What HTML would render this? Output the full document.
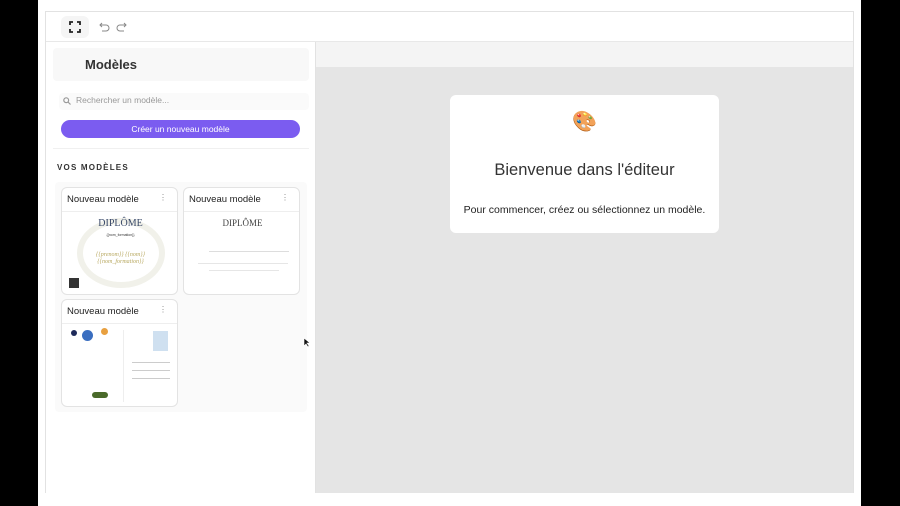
<!DOCTYPE html>
<html><head><meta charset="utf-8"><style>
*{box-sizing:border-box;margin:0;padding:0}
body{width:900px;height:506px;background:#000;position:relative;overflow:hidden;font-family:"Liberation Sans",sans-serif;color:#222}
.page{position:absolute;left:38px;top:0;width:823px;height:506px;background:#fff}
.frame{position:absolute;left:45px;top:11px;width:809px;height:482px;border:1px solid #e2e2e2;background:#fff}
.tb{position:absolute;left:0;top:0;width:807px;height:30px;border-bottom:1px solid #e8e8e8}
.side{position:absolute;left:0;top:30px;width:270px;height:451px;border-right:1px solid #e2e2e2;background:#fff}
.strip{position:absolute;left:270px;top:30px;width:537px;height:25px;background:#f4f4f4}
.canvas{position:absolute;left:270px;top:55px;width:537px;height:426px;background:#e5e5e5}
.welcome{position:absolute;left:134px;top:28px;width:269px;height:138px;background:#fff;border-radius:6px;text-align:center}
.card{position:absolute;width:117px;height:108px;border:1px solid #e3e3e3;border-radius:6px;background:#fff;overflow:hidden}
.card .h{height:24px;border-bottom:1px solid #eee;font-size:9.5px;padding:6px 0 0 5px;position:relative;color:#222}
.card .h b{position:absolute;right:10px;top:5px;font-weight:normal;color:#888;font-size:8px}
</style></head><body>
<div class="page"></div>
<div class="frame">
 <div class="tb">
  <div style="position:absolute;left:15px;top:4px;width:28px;height:22px;border-radius:6px;background:#f5f5f5"></div>
  <svg style="position:absolute;left:23px;top:9px" width="12" height="12" viewBox="0 0 12 12" fill="none" stroke="#222" stroke-width="1.8"><path d="M1 4V1h3M8 1h3v3M11 8v3H8M4 11H1V8"/></svg>
  <svg style="position:absolute;left:53px;top:10px" width="28" height="10" viewBox="0 0 28 10" fill="none" stroke="#888" stroke-width="1"><path d="M3 1L1 3l2 2M1 3h6a3 3 0 010 6H3M25 1l2 2-2 2M27 3h-6a3 3 0 000 6h4"/></svg>
 </div>
 <div class="side">
  <div style="position:absolute;left:7px;top:6px;width:256px;height:33px;background:#f8f8f8;border-radius:4px"></div>
  <div style="position:absolute;left:39px;top:15px;font-size:13px;font-weight:bold;color:#333">Modèles</div>
  <div style="position:absolute;left:13px;top:51px;width:250px;height:17px;background:#fafafa;border-radius:4px"></div>
  <svg style="position:absolute;left:17px;top:55px" width="8" height="8" viewBox="0 0 8 8" fill="none" stroke="#999" stroke-width="1.2"><circle cx="3.2" cy="3.2" r="2.4"/><path d="M5 5l2.5 2.5"/></svg>
  <div style="position:absolute;left:30px;top:53px;font-size:8.5px;color:#999">Rechercher un modèle...</div>
  <div style="position:absolute;left:15px;top:78px;width:239px;height:18px;background:#7b5cf0;border-radius:9px;color:#fff;font-size:8.5px;text-align:center;line-height:18px">Créer un nouveau modèle</div>
  <div style="position:absolute;left:7px;top:106px;width:256px;height:1px;background:#f0f0f0"></div>
  <div style="position:absolute;left:11px;top:121px;font-size:8px;font-weight:bold;letter-spacing:1.2px;color:#333">VOS MODÈLES</div>
  <div style="position:absolute;left:9px;top:140px;width:252px;height:230px;background:#fafafa;border-radius:4px"></div>
  <div class="card" style="left:15px;top:145px"><div class="h">Nouveau modèle<b>⋮</b></div>
   <div style="position:absolute;left:15px;top:30px;width:88px;height:70px;border-radius:50%;border:6px solid #f1f1ea"></div>
   <div style="position:absolute;left:0;width:117px;top:30px;text-align:center;font-family:'Liberation Serif',serif;font-size:10px;color:#3a4a6a">DIPLÔME</div>
   <div style="position:absolute;left:0;width:117px;top:45px;text-align:center;font-size:3.5px;color:#333">{{nom_formation}}</div>
   <div style="position:absolute;left:0;width:117px;top:64px;text-align:center;font-family:'Liberation Serif',serif;font-style:italic;font-size:6px;color:#b8a860;line-height:7px">{{prenom}} {{nom}}<br>{{nom_formation}}</div>
   <div style="position:absolute;left:7px;top:90px;width:10px;height:10px;background:#333"></div>
  </div>
  <div class="card" style="left:137px;top:145px"><div class="h">Nouveau modèle<b>⋮</b></div>
   <div style="position:absolute;left:0;width:117px;top:30px;text-align:center;font-family:'Liberation Serif',serif;font-size:9px;color:#444">DIPLÔME</div>
   <div style="position:absolute;left:25px;top:63px;width:80px;height:1px;background:#ddd"></div>
   <div style="position:absolute;left:14px;top:75px;width:90px;height:1px;background:#e6e6e6"></div>
   <div style="position:absolute;left:25px;top:82px;width:70px;height:1px;background:#e6e6e6"></div>
  </div>
  <div class="card" style="left:15px;top:257px"><div class="h">Nouveau modèle<b>⋮</b></div>
   <div style="position:absolute;left:9px;top:30px;width:6px;height:6px;border-radius:50%;background:#1e2a5a"></div>
   <div style="position:absolute;left:20px;top:30px;width:11px;height:11px;border-radius:50%;background:#3a6ec0"></div>
   <div style="position:absolute;left:39px;top:28px;width:7px;height:7px;border-radius:50%;background:#e8a040"></div>
   <div style="position:absolute;left:61px;top:30px;width:1px;height:72px;background:#eee"></div>
   <div style="position:absolute;left:91px;top:31px;width:15px;height:20px;background:#cfe0f0"></div>
   <div style="position:absolute;left:70px;top:62px;width:38px;height:1px;background:#ccc"></div>
   <div style="position:absolute;left:70px;top:70px;width:38px;height:1px;background:#ccc"></div>
   <div style="position:absolute;left:70px;top:78px;width:38px;height:1px;background:#ccc"></div>
   <div style="position:absolute;left:30px;top:92px;width:16px;height:6px;background:#4a6a2a;border-radius:3px"></div>
  </div>
 </div>
 <div class="strip"></div>
 <div class="canvas">
  <div class="welcome">
   <div style="margin-top:15px;font-size:20px;line-height:24px">🎨</div>
   <div style="margin-top:27px;font-size:16.5px;color:#333">Bienvenue dans l'éditeur</div>
   <div style="margin-top:24px;font-size:10.5px;color:#222">Pour commencer, créez ou sélectionnez un modèle.</div>
  </div>
  <svg style="position:absolute;left:-13px;top:270px" width="8" height="11" viewBox="0 0 8 11"><path d="M1 1v8l2-2 2 3 1-1-2-3h3z" fill="#111" stroke="#fff" stroke-width=".6"/></svg>
 </div>
</div>
</body></html>
